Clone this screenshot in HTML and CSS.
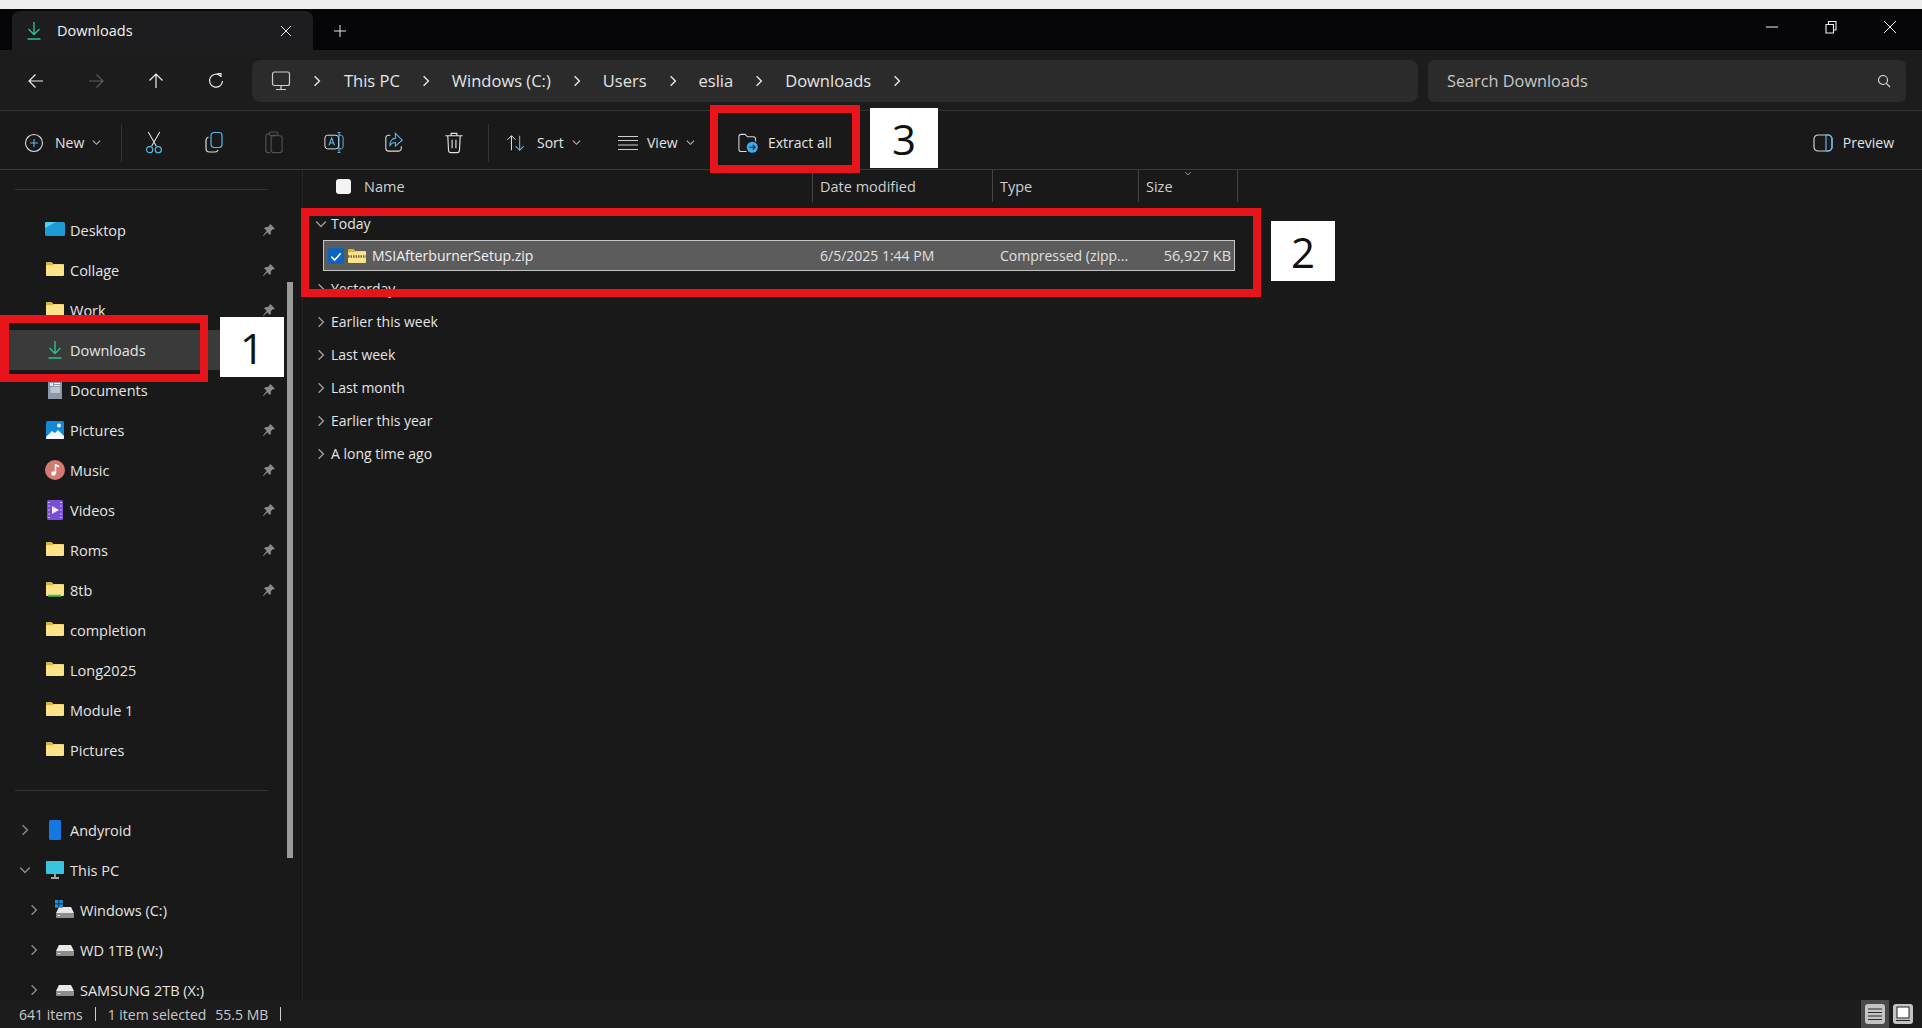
FILE: index.html
```html
<!DOCTYPE html>
<html lang="en">
<head>
    <meta charset="UTF-8">
    <title>Downloads - File Explorer</title>
    <link rel="stylesheet" href="styles.css">
</head>
<body>
    <svg class="defs" width="0" height="0">
        <symbol id="folder" viewBox="0 0 20 16">
            <path d="M1 2.2c0-.7.5-1.2 1.200-1.200h4.300l2 2h9.300c.7 0 1.200.5 1.200 1.200v9.600c0 .7-.5 1.200-1.200 1.200H2.200c-.7 0-1.200-.5-1.200-1.200z" fill="#d8b83a"/>
            <path d="M1 5.200c0-.6.5-1 1-1h5.500l1.500-1h9c.6 0 1 .5 1 1v9.600c0 .7-.5 1.200-1.200 1.200H2.200c-.7 0-1.200-.5-1.200-1.200z" fill="#fbe38a"/>
        </symbol>
        <symbol id="pin" viewBox="0 0 14 14">
            <path d="M8.300 1l4.700 4.700-1 .6-1-.2-2.300 2.300.2 2.300-1.200 1.200-2.400-2.600L1.500 13 1 12.500l3.700-4.800L2.100 5.300l1.200-1.200 2.300.2 2.300-2.300-.2-1z" fill="#8b8b8b"/>
        </symbol>
        <symbol id="down" viewBox="0 0 18 20">
            <path d="M9 1v12M3.500 8L9 13.500 14.500 8M2.500 18h13" fill="none" stroke="#2fbf98" stroke-width="1.400"/>
        </symbol>
        <symbol id="chev-r" viewBox="0 0 10 10">
            <path d="M3 1l4 4-4 4" fill="none" stroke="currentColor" stroke-width="1.200"/>
        </symbol>
        <symbol id="chev-d" viewBox="0 0 10 10">
            <path d="M1 3l4 4 4-4" fill="none" stroke="currentColor" stroke-width="1.200"/>
        </symbol>
        <symbol id="drive" viewBox="0 0 20 14">
            <path d="M4 2h12l3 6H1z" fill="#e8e8e8"/>
            <rect x="1" y="8" width="18" height="5" rx="1" fill="#8d8d8d"/>
            <rect x="3" y="10" width="2" height="1" fill="#dfdfdf"/>
        </symbol>
    </svg>

    <div class="app">
        <div class="top-strip"></div>

        <div class="titlebar">
            <div class="tab">
                <svg class="tab-icon"><use href="#down"/></svg>
                <span class="tab-label">Downloads</span>
                <svg class="tab-close" viewBox="0 0 12 12"><path d="M1 1l10 10M11 1L1 11" stroke="#e6e6e6" stroke-width="1"/></svg>
            </div>
            <svg class="tab-add" viewBox="0 0 14 14"><path d="M7 1v12M1 7h12" stroke="#e6e6e6" stroke-width="1"/></svg>
            <div class="window-controls">
                <svg viewBox="0 0 14 14"><path d="M1 7h12" stroke="#eee" stroke-width="1"/></svg>
                <svg viewBox="0 0 14 14"><path d="M2 4.500h7.500V13H2zM4.500 4V1.500H12V10h-2" fill="none" stroke="#eee" stroke-width="1.100"/></svg>
                <svg viewBox="0 0 14 14"><path d="M1 1l12 12M13 1L1 13" stroke="#eee" stroke-width="1"/></svg>
            </div>
        </div>

        <div class="navbar">
            <div class="nav-buttons">
                <svg viewBox="0 0 18 18"><path d="M16 9H2M8.500 2.500L2 9l6.500 6.500" fill="none" stroke="#eee" stroke-width="1.200"/></svg>
                <svg viewBox="0 0 18 18"><path d="M2 9h14M9.500 2.500L16 9l-6.500 6.500" fill="none" stroke="#5c5c5c" stroke-width="1.200"/></svg>
                <svg viewBox="0 0 18 18"><path d="M9 16V2M2.500 8.500L9 2l6.500 6.500" fill="none" stroke="#eee" stroke-width="1.200"/></svg>
                <svg viewBox="0 0 18 18"><path d="M13.500 4A6.500 6.500 0 1 0 15.500 9M10.500 1.500h3.500V5" fill="none" stroke="#eee" stroke-width="1.200"/></svg>
            </div>
            <div class="address">
                <svg class="crumb-pc" viewBox="0 0 20 20"><rect x="1.500" y="1" width="17" height="13.500" rx="2" fill="#2b2b2b" stroke="#cfcfcf" stroke-width="1.200"/><path d="M10 15v3M5 18.500h10" stroke="#cfcfcf" stroke-width="1.200"/></svg>
                <svg class="crumb-chev first"><use href="#chev-r"/></svg>
                <span class="crumb c-pc">This PC</span>
                <svg class="crumb-chev"><use href="#chev-r"/></svg>
                <span class="crumb c-win">Windows (C:)</span>
                <svg class="crumb-chev"><use href="#chev-r"/></svg>
                <span class="crumb c-users">Users</span>
                <svg class="crumb-chev"><use href="#chev-r"/></svg>
                <span class="crumb c-eslia">eslia</span>
                <svg class="crumb-chev"><use href="#chev-r"/></svg>
                <span class="crumb c-dl">Downloads</span>
                <svg class="crumb-chev"><use href="#chev-r"/></svg>
            </div>
            <div class="search">
                <span>Search Downloads</span>
                <svg viewBox="0 0 14 14"><circle cx="6" cy="6" r="4.500" fill="none" stroke="#ddd" stroke-width="1.100"/><path d="M9.300 9.300L13 13" stroke="#ddd" stroke-width="1.100"/></svg>
            </div>
        </div>

        <div class="cmdbar">
            <div class="cmd cmd-new">
                <svg viewBox="0 0 20 20"><circle cx="10" cy="10" r="8.500" fill="none" stroke="#dcdcdc" stroke-width="1.100"/><path d="M10 6v8M6 10h8" stroke="#5cb8e8" stroke-width="1.100"/></svg>
                <span>New</span>
                <svg class="caret"><use href="#chev-d"/></svg>
            </div>
            <div class="cmd-sep first"></div>
            <div class="cmd-icon">
                <svg viewBox="0 0 20 24"><path d="M4 1l8.500 15M16 1L7.500 16" stroke="#e2e2e2" stroke-width="1.100" fill="none"/><circle cx="5.500" cy="19.500" r="3.200" fill="none" stroke="#5cb8e8" stroke-width="1.200"/><circle cx="14.500" cy="19.500" r="3.200" fill="none" stroke="#5cb8e8" stroke-width="1.200"/></svg>
            </div>
            <div class="cmd-icon">
                <svg viewBox="0 0 20 22"><rect x="7" y="1" width="11" height="15" rx="3" fill="none" stroke="#5cb8e8" stroke-width="1.200"/><path d="M4.500 5.500C3 6 2 7 2 8.500V17c0 2 1.500 3.500 3.500 3.500H11c1.500 0 2.500-.7 3-2" fill="none" stroke="#dcdcdc" stroke-width="1.200"/></svg>
            </div>
            <div class="cmd-icon dim">
                <svg viewBox="0 0 20 24"><path d="M6 3H4C2.500 3 1.500 4 1.500 5.500V20c0 1.500 1 2.500 2.500 2.500h2" fill="none" stroke="#505050" stroke-width="1.200"/><rect x="7" y="5" width="11.500" height="17.500" rx="2.500" fill="none" stroke="#505050" stroke-width="1.200"/><rect x="5" y="1" width="9" height="3.500" rx="1.500" fill="none" stroke="#505050" stroke-width="1.200"/></svg>
            </div>
            <div class="cmd-icon">
                <svg viewBox="0 0 22 24"><rect x="1" y="4" width="15" height="15" rx="3" fill="none" stroke="#dcdcdc" stroke-width="1.100"/><path d="M5.500 15l3-8 3 8M6.500 12.500h4" fill="none" stroke="#5cb8e8" stroke-width="1.200"/><path d="M15 1h3M15 23h3M16.500 1v22M16.500 4H19c1 0 2 1 2 3v9c0 2-1 3-2 3h-2" fill="none" stroke="#5cb8e8" stroke-width="1.100"/></svg>
            </div>
            <div class="cmd-icon">
                <svg viewBox="0 0 22 24"><path d="M7 4H5C3 4 2 5.500 2 7v11c0 2 1.500 3.500 3 3.500h11c1.500 0 3-1.500 3-3V16" fill="none" stroke="#dcdcdc" stroke-width="1.200"/><path d="M12.500 2L20 9.500l-7.500 6.500v-4C9 12 7.500 13.500 6.500 16c0-5 2-8.500 6-8.500z" fill="none" stroke="#5cb8e8" stroke-width="1.200"/></svg>
            </div>
            <div class="cmd-icon">
                <svg viewBox="0 0 20 24"><path d="M1 5h18M7 5V2.500h6V5M3.500 5l.8 15c.1 1.500 1 2.500 2.500 2.500h6.400c1.500 0 2.400-1 2.500-2.500l.8-15M8 9v9M12 9v9" fill="none" stroke="#e2e2e2" stroke-width="1.200"/></svg>
            </div>
            <div class="cmd-sep second"></div>
            <div class="cmd cmd-sort">
                <svg viewBox="0 0 22 20"><path d="M6 18V2M1.500 6.500L6 2l4.500 4.500" fill="none" stroke="#e2e2e2" stroke-width="1.100"/><path d="M15 2v16M10.500 13.500L15 18l4.500-4.500" fill="none" stroke="#5cb8e8" stroke-width="1.200"/></svg>
                <span>Sort</span>
                <svg class="caret"><use href="#chev-d"/></svg>
            </div>
            <div class="cmd cmd-view">
                <svg viewBox="0 0 20 16"><path d="M0 1.500h20M0 5.500h20M0 10h20M0 14.500h20" stroke="#d0d0d0" stroke-width="1.200"/></svg>
                <span>View</span>
                <svg class="caret"><use href="#chev-d"/></svg>
            </div>
            <div class="cmd cmd-extract">
                <svg viewBox="0 0 22 22"><path d="M2 18V5c0-1.500 1-2.500 2.500-2.500h4L11 5h6c1.500 0 2.500 1 2.500 2.500V10M2 18c0 1.500 1 2.500 2.500 2.500H10" fill="none" stroke="#d8d8d8" stroke-width="1.100"/><circle cx="16" cy="16" r="5.800" fill="#3fa9ee"/><path d="M12.800 16h6M16.500 13.500l2.500 2.500-2.500 2.500" fill="none" stroke="#12283a" stroke-width="1.200"/></svg>
                <span>Extract all</span>
            </div>
            <div class="cmd cmd-preview">
                <svg viewBox="0 0 20 18"><rect x="1" y="1" width="18" height="16" rx="4" fill="none" stroke="#d0d0d0" stroke-width="1.200"/><path d="M13 1v16M13 1h2c2 0 4 2 4 4v8c0 2-2 4-4 4h-2" fill="none" stroke="#5cb8e8" stroke-width="1.200"/></svg>
                <span>Preview</span>
            </div>
        </div>

        <div class="main">
            <nav class="sidebar">
                <div class="side-sep"></div>
                <div class="side-item"><svg class="side-icon" viewBox="0 0 20 16"><rect y="1" width="20" height="14" rx="1.500" fill="#1e9ad6"/><path d="M0 2.500C0 1.500.7 1 1.500 1H11L0 7z" fill="#52d1ef"/></svg><span>Desktop</span><svg class="pin"><use href="#pin"/></svg></div>
                <div class="side-item"><svg class="side-icon"><use href="#folder"/></svg><span>Collage</span><svg class="pin"><use href="#pin"/></svg></div>
                <div class="side-item"><svg class="side-icon"><use href="#folder"/></svg><span>Work</span><svg class="pin"><use href="#pin"/></svg></div>
                <div class="side-item active"><svg class="side-icon"><use href="#down"/></svg><span>Downloads</span><svg class="pin"><use href="#pin"/></svg></div>
                <div class="side-item"><svg class="side-icon" viewBox="0 0 20 20"><path d="M3 1h14v18H3z" fill="#8c98a8"/><path d="M9 3.500h6M9 5.500h6M5.500 8h9.500M5.500 10h9.500M5.500 12h9.500" stroke="#eef2f6"/><rect x="5" y="3" width="3" height="3" fill="#dfe6ee"/></svg><span>Documents</span><svg class="pin"><use href="#pin"/></svg></div>
                <div class="side-item"><svg class="side-icon" viewBox="0 0 20 20"><rect x="1" y="1" width="18" height="18" rx="1.500" fill="#1488d8"/><path d="M1 17l6-6 3 2 3-3 6 6v2c0 .6-.5 1-1 1H2c-.6 0-1-.5-1-1z" fill="#f4f8fc"/><circle cx="14" cy="5.500" r="2" fill="#f4f8fc"/></svg><span>Pictures</span><svg class="pin"><use href="#pin"/></svg></div>
                <div class="side-item"><svg class="side-icon" viewBox="0 0 20 20"><circle cx="10" cy="10" r="10" fill="#d47a70"/><path d="M10.500 4v9" stroke="#fff" stroke-width="1.500"/><path d="M10.500 4l3.500 1.500v2L10.500 6z" fill="#fff"/><circle cx="8.500" cy="13.500" r="2.200" fill="#fff"/></svg><span>Music</span><svg class="pin"><use href="#pin"/></svg></div>
                <div class="side-item"><svg class="side-icon" viewBox="0 0 20 20"><rect x="2" y="0" width="16" height="20" rx="1.500" fill="#7a4fd8"/><path d="M7 6l7 4-7 4z" fill="#f2ecff"/><path d="M3 2.500h2M3 6h2M3 10h2M3 14h2M3 17.500h2M15 2.500h2M15 6h2M15 10h2M15 14h2M15 17.500h2" stroke="#cdbcf5"/></svg><span>Videos</span><svg class="pin"><use href="#pin"/></svg></div>
                <div class="side-item"><svg class="side-icon"><use href="#folder"/></svg><span>Roms</span><svg class="pin"><use href="#pin"/></svg></div>
                <div class="side-item"><svg class="side-icon" viewBox="0 0 20 16"><use href="#folder"/><path d="M3 14.700h13" stroke="#4fc04f" stroke-width="2"/></svg><span>8tb</span><svg class="pin"><use href="#pin"/></svg></div>
                <div class="side-item"><svg class="side-icon"><use href="#folder"/></svg><span>completion</span></div>
                <div class="side-item"><svg class="side-icon"><use href="#folder"/></svg><span>Long2025</span></div>
                <div class="side-item"><svg class="side-icon"><use href="#folder"/></svg><span>Module 1</span></div>
                <div class="side-item"><svg class="side-icon"><use href="#folder"/></svg><span>Pictures</span></div>
                <div class="side-sep lower"></div>
                <div class="side-item"><svg class="tree-chev"><use href="#chev-r"/></svg><svg class="side-icon" viewBox="0 0 20 20"><rect x="4" y="0" width="12" height="20" rx="1.500" fill="#1478e0"/></svg><span>Andyroid</span></div>
                <div class="side-item"><svg class="tree-chev"><use href="#chev-d"/></svg><svg class="side-icon" viewBox="0 0 20 20"><rect x="1" y="1" width="18" height="13" rx="1" fill="#39c4e0"/><path d="M10 14v3M6 18h8" stroke="#d8d8d8" stroke-width="1.400"/></svg><span>This PC</span></div>
                <div class="side-item child"><svg class="tree-chev"><use href="#chev-r"/></svg><svg class="side-icon" viewBox="0 0 20 20"><use href="#drive" width="20" height="14" y="5"/><path d="M0 0h3.500v3.500H0zM4.300 0h3.500v3.500H4.300zM0 4.300h3.500v3.500H0zM4.300 4.300h3.500v3.500H4.300z" fill="#1c8fe0"/></svg><span>Windows (C:)</span></div>
                <div class="side-item child"><svg class="tree-chev"><use href="#chev-r"/></svg><svg class="side-icon" viewBox="0 0 20 20"><use href="#drive" width="20" height="14" y="3"/></svg><span>WD 1TB (W:)</span></div>
                <div class="side-item child"><svg class="tree-chev"><use href="#chev-r"/></svg><svg class="side-icon" viewBox="0 0 20 20"><use href="#drive" width="20" height="14" y="3"/></svg><span>SAMSUNG 2TB (X:)</span></div>
                <div class="side-scroll"></div>
            </nav>

            <section class="files">
                <div class="col-head">
                    <div class="col col-name"><span class="head-check"></span><span>Name</span></div>
                    <div class="col col-date">Date modified</div>
                    <div class="col col-type">Type</div>
                    <div class="col col-size">Size<svg class="sort-mark"><use href="#chev-d"/></svg></div>
                </div>
                <div class="group open"><svg><use href="#chev-d"/></svg><span>Today</span></div>
                <div class="file-row">
                    <span class="file-check"><svg viewBox="0 0 12 12"><path d="M2.500 6.500l2.500 2.500 4.500-5" fill="none" stroke="#fff" stroke-width="1.200"/></svg></span>
                    <svg class="file-icon" viewBox="0 0 20 16"><use href="#folder"/><path d="M1 8.500h18" stroke="#6b6250" stroke-width="2.500" stroke-dasharray="1.500 1"/></svg>
                    <span class="file-name">MSIAfterburnerSetup.zip</span>
                    <span class="file-date">6/5/2025 1:44 PM</span>
                    <span class="file-type">Compressed (zipp...</span>
                    <span class="file-size">56,927 KB</span>
                </div>
                <div class="group"><svg><use href="#chev-r"/></svg><span>Yesterday</span></div>
                <div class="group"><svg><use href="#chev-r"/></svg><span>Earlier this week</span></div>
                <div class="group"><svg><use href="#chev-r"/></svg><span>Last week</span></div>
                <div class="group"><svg><use href="#chev-r"/></svg><span>Last month</span></div>
                <div class="group"><svg><use href="#chev-r"/></svg><span>Earlier this year</span></div>
                <div class="group"><svg><use href="#chev-r"/></svg><span>A long time ago</span></div>
            </section>
        </div>

        <div class="statusbar">
            <span>641 items</span><i></i><span>1 item selected</span><span class="st-size">55.5 MB</span><i></i>
            <div class="view-toggle">
                <div class="vt vt-on"><b><svg viewBox="0 0 20 20"><path d="M3 5h14M3 8.500h14M3 12h14M3 15.500h14" stroke="#2a2a2a" stroke-width="1.200"/></svg></b></div>
                <div class="vt"><b><svg viewBox="0 0 20 20"><rect x="4" y="3" width="12" height="11" fill="#fff" stroke="#222"/><path d="M3 16.500h14" stroke="#222"/></svg></b></div>
            </div>
        </div>

        <div class="mark mark-1"></div>
        <div class="mark mark-2"></div>
        <div class="mark mark-3"></div>
        <div class="tag tag-1">1</div>
        <div class="tag tag-2">2</div>
        <div class="tag tag-3">3</div>
    </div>
</body>
</html>
```

FILE: styles.css
```css
* {
    margin: 0;
    padding: 0;
    box-sizing: border-box;
}
html, body {
    height: 100%;
    overflow: hidden;
}
body {
    font-family: "Open Sans", "Noto Sans", Arial, sans-serif;
    font-size: 14.500px;
    background-color: #191919;
    color: #e4e4e4;
}
.defs {
    position: absolute;
}
.app {
    position: relative;
    width: 1922px;
    height: 1028px;
    display: flex;
    flex-direction: column;
}
.top-strip {
    height: 9px;
    background-color: #eeeeee;
}

/* title bar */
.titlebar {
    height: 41px;
    display: flex;
    align-items: flex-end;
    background-color: #060609;
}
.tab {
    width: 301px;
    height: 39px;
    margin-left: 12px;
    display: flex;
    align-items: center;
    background-color: #1d1d1f;
    border-radius: 8px 8px 0 0;
}
.tab-icon {
    width: 18px;
    height: 20px;
    margin-left: 13px;
}
.tab-label {
    margin-left: 14px;
    color: #f2f2f2;
}
.tab-close {
    width: 12px;
    height: 12px;
    margin-left: auto;
    margin-right: 21px;
}
.tab-add {
    width: 14px;
    height: 14px;
    margin: 0 0 12px 20px;
}
.window-controls {
    margin-left: auto;
    display: flex;
    gap: 45px;
    padding: 0 25px 16px 0;
}
.window-controls svg {
    width: 14px;
    height: 14px;
}

/* nav row */
.navbar {
    height: 61px;
    display: flex;
    align-items: center;
    background-color: #1c1c1d;
    border-bottom: 1px solid #333;
    padding-top: 1px;
}
.nav-buttons {
    width: 252px;
    display: flex;
    gap: 42px;
    padding-left: 27px;
}
.nav-buttons svg {
    width: 18px;
    height: 18px;
}
.address {
    width: 1166px;
    height: 42px;
    display: flex;
    align-items: center;
    background-color: #2b2b2b;
    border-radius: 8px;
    font-size: 16.500px;
}
.crumb-pc {
    width: 20px;
    height: 20px;
    margin-left: 19px;
}
.crumb-chev {
    width: 12px;
    height: 12px;
    margin: 0 20px;
    color: #e4e4e4;
}
.crumb-chev.first {
    margin-left: 20px;
    margin-right: 21px;
}
.search {
    width: 478px;
    height: 42px;
    margin-left: 10px;
    display: flex;
    align-items: center;
    justify-content: space-between;
    padding: 0 15px 0 19px;
    background-color: #2b2b2b;
    border-radius: 6px;
    font-size: 16.300px;
    color: #c8c8c8;
}
.search svg {
    width: 14px;
    height: 14px;
}

/* command bar */
.cmdbar {
    height: 59px;
    display: flex;
    align-items: center;
    padding-top: 5px;
    background-color: #191919;
    border-bottom: 1px solid #3a3a3a;
}
.cmd {
    display: flex;
    align-items: center;
    font-size: 14px;
}
.cmd svg {
    flex: none;
}
.caret {
    width: 9px;
    height: 9px;
    margin-left: 8px;
    color: #bbb;
}
.cmd-new {
    width: 121px;
    padding-left: 24px;
}
.cmd-new > svg:first-child {
    width: 20px;
    height: 20px;
    margin-right: 11px;
}
.cmd-sep {
    width: 1px;
    height: 38px;
    background-color: #333;
}
.cmd-sep.first {
    margin-right: 2px;
}
.cmd-sep.second {
    margin-left: 4px;
}
.cmd-icon {
    width: 60px;
    height: 36px;
    display: flex;
    align-items: center;
    justify-content: center;
}
.cmd-icon svg {
    width: 20px;
    height: 23px;
}
.cmd-sort {
    padding-left: 17px;
    width: 113px;
}
.cmd-sort > svg:first-child {
    width: 20px;
    height: 20px;
    margin-right: 11px;
}
.cmd-view {
    width: 135px;
    padding-left: 16px;
}
.cmd-view > svg:first-child {
    width: 20px;
    height: 16px;
    margin-right: 9px;
}
.cmd-extract {
    width: 100px;
}
.cmd-extract > svg:first-child {
    width: 21px;
    height: 21px;
    margin-right: 10px;
}
.cmd-preview {
    margin-left: auto;
    padding-right: 28px;
}
.cmd-preview > svg:first-child {
    width: 20px;
    height: 18px;
    margin-right: 10px;
}

/* sidebar */
.main {
    flex: 1;
    min-height: 0;
    display: flex;
    overflow: hidden;
}
.sidebar {
    position: relative;
    width: 303px;
    flex: none;
    overflow: hidden;
    border-right: 1px solid #262626;
    padding-top: 19px;
}
.side-sep {
    height: 1px;
    margin: 0 34px 0 15px;
    background-color: #333;
    margin-bottom: 20px;
}
.side-sep.lower {
    margin-top: 20px;
    margin-bottom: 19px;
}
.side-item {
    position: relative;
    height: 40px;
    display: flex;
    align-items: center;
    padding-left: 70px;
}
.side-item.active {
    background-color: #3a3a3a;
    margin-right: 27px;
}
.side-icon {
    position: absolute;
    left: 45px;
    top: 11px;
    width: 20px;
    height: 16px;
}
svg.side-icon[viewBox="0 0 20 20"] {
    top: 10px;
    height: 20px;
}
.active .side-icon {
    top: 10px;
    width: 18px;
    height: 20px;
    left: 46px;
}
.child {
    padding-left: 80px;
}
.child .side-icon {
    left: 55px;
}
.pin {
    position: absolute;
    left: 262px;
    top: 13px;
    width: 14px;
    height: 14px;
}
.active .pin {
    display: none;
}
.tree-chev {
    position: absolute;
    left: 19px;
    top: 14px;
    width: 12px;
    height: 12px;
    color: #8a8a8a;
}
.child .tree-chev {
    left: 28px;
}
.side-scroll {
    position: absolute;
    left: 287px;
    top: 112px;
    width: 6px;
    height: 576px;
    background-color: #9b9b9b;
}

/* file list */
.files {
    flex: 1;
    min-width: 0;
}
.col-head {
    height: 32px;
    margin-bottom: 5px;
    display: flex;
    color: #cfcfcf;
    font-size: 14.500px;
}
.col {
    display: flex;
    align-items: center;
    border-right: 1px solid #444;
    padding-left: 7px;
    position: relative;
}
.col-name {
    width: 510px;
    padding-left: 33px;
}
.head-check {
    width: 15px;
    height: 15px;
    margin-right: 13px;
    background-color: #f4f4f4;
    border-radius: 3px;
}
.col-date {
    width: 180px;
}
.col-type {
    width: 146px;
}
.col-size {
    width: 99px;
}
.sort-mark {
    position: absolute;
    left: 44px;
    top: 0;
    width: 10px;
    height: 7px;
    color: #aaa;
}
.group {
    height: 33px;
    display: flex;
    align-items: center;
    padding-left: 12px;
    font-size: 14px;
}
.group svg {
    width: 12px;
    height: 12px;
    margin-right: 4px;
    color: #9a9a9a;
}
.file-row {
    height: 31px;
    margin: 0 0 1px 20px;
    width: 912px;
    display: flex;
    align-items: center;
    background-color: #5c5c5c;
    border: 1px solid #c4c4c4;
    font-size: 14px;
    color: #e0e0e0;
}
.file-check {
    width: 16px;
    height: 16px;
    margin-left: 4px;
    display: flex;
    background-color: #0a64c2;
    border-radius: 3px;
}
.file-icon {
    width: 20px;
    height: 16px;
    margin: 0 5px 0 3px;
    flex: none;
}
.file-name {
    width: 448px;
    color: #f0f0f0;
}
.file-date {
    width: 180px;
}
.file-type {
    width: 141px;
    white-space: nowrap;
}
.file-size {
    width: 90px;
    text-align: right;
    font-size: 14.500px;
}

/* status bar */
.statusbar {
    height: 28px;
    flex: none;
    display: flex;
    align-items: center;
    padding-left: 19px;
    font-size: 14px;
    color: #c8c8c8;
    background-color: #1c1c1c;
}
.statusbar i {
    width: 1px;
    height: 14px;
    margin: 0 12px;
    background-color: #ccc;
}
.st-size {
    margin-left: 9px;
}
.view-toggle {
    margin-left: auto;
    display: flex;
    padding-right: 5px;
}
.vt {
    width: 28px;
    height: 28px;
    padding: 4px;
}
.vt-on {
    background-color: #4a4a4a;
}
.vt b {
    display: block;
    width: 20px;
    height: 20px;
    background-color: #c4c4c4;
    border-radius: 3px;
}
.vt svg {
    display: block;
}

/* red annotation boxes drawn over the screenshot */
.mark {
    position: absolute;
    border: 8px solid #e8141c;
}
.mark-1 {
    left: 0;
    top: 315px;
    width: 208px;
    height: 67px;
    border-left-width: 9px;
}
.mark-2 {
    left: 301px;
    top: 208px;
    width: 960px;
    height: 89px;
}
.mark-3 {
    left: 710px;
    top: 105px;
    width: 150px;
    height: 68px;
}
.tag {
    position: absolute;
    width: 64px;
    height: 60px;
    display: flex;
    align-items: center;
    justify-content: center;
    background-color: #fff;
    color: #111;
    font-size: 42px;
}
.tag-1 {
    left: 220px;
    top: 317px;
}
.tag-2 {
    left: 1271px;
    top: 221px;
}
.tag-3 {
    left: 870px;
    top: 108px;
    width: 68px;
}
```
